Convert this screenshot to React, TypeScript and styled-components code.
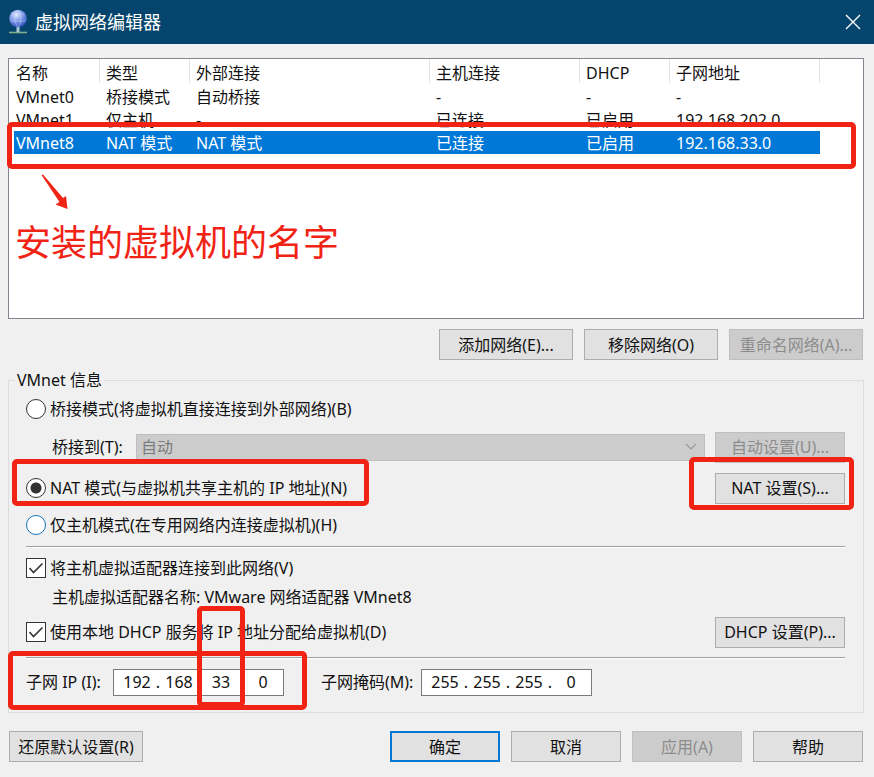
import React from "react";
import styled, { createGlobalStyle, css } from "styled-components";

const RED = "#f02314";

const GlobalStyle = createGlobalStyle`
  *, *::before, *::after { box-sizing: border-box; }
  body { margin: 0; background: #f0f0f0; }
  body, button, input, select {
    font-family: "Noto Sans", "Noto Sans CJK SC", sans-serif;
    font-size: 16px;
    line-height: 20px;
    color: #111;
  }
`;

const Dialog = styled.div`
  min-height: 100vh;
  background: #f0f0f0;
`;

const TitleBar = styled.header`
  display: flex;
  align-items: center;
  gap: 7px;
  height: 44px;
  padding: 0 12px 0 8px;
  background: #05456d;
  color: #fff;
`;

const Title = styled.h1`
  flex: 1;
  margin: 0;
  font-size: 18px;
  font-weight: 400;
  line-height: 24px;
`;

const CloseButton = styled.button`
  display: flex;
  padding: 0;
  border: 0;
  background: none;
`;

const Body = styled.main`
  padding: 14px 10px 14px 8px;
`;

const NetworkList = styled.section`
  position: relative;
  min-height: 261px;
  padding: 0 5px;
  background: #fff;
  border: 1px solid #828790;
`;

const Table = styled.table`
  width: 806px;
  table-layout: fixed;
  border-collapse: separate;
  border-spacing: 0;
  text-align: left;
`;

const Column = styled.col<{ $width: number }>`
  width: ${(p) => p.$width}px;
`;

const HeadCell = styled.th`
  height: 26px;
  padding: 1px 0 0 6px;
  font-weight: 400;
  white-space: nowrap;
  background: linear-gradient(#e2e2e2, #e2e2e2) right top / 1px 24px no-repeat;
  &:first-child { padding-left: 2px; }
`;

const Row = styled.tr<{ $selected?: boolean }>`
  ${(p) => p.$selected && css`background: #0078d7; color: #fff;`}
`;

const Cell = styled.td`
  height: 23px;
  padding: 0 0 0 6px;
  white-space: nowrap;
  &:first-child { padding-left: 2px; }
`;

const Mark = styled.span<{ $inset: string }>`
  position: absolute;
  inset: ${(p) => p.$inset};
  border: 5px solid ${RED};
  border-radius: 5px;
  pointer-events: none;
  z-index: 1;
`;

const Note = styled.p`
  position: absolute;
  left: 6px;
  top: 160px;
  margin: 0;
  color: ${RED};
  font-size: 36px;
  line-height: 48px;
  white-space: nowrap;
`;

const NoteArrow = styled.svg`
  position: absolute;
  left: 32px;
  top: 115px;
`;

const ButtonRow = styled.div`
  display: flex;
  justify-content: flex-end;
  gap: 11px;
  padding: 10px 1px 0;
`;

const Footer = styled(ButtonRow)`
  padding-top: 18px;
`;

const Button = styled.button<{ $width: number; $primary?: boolean; $push?: boolean }>`
  width: ${(p) => p.$width}px;
  height: 31px;
  padding: 0;
  flex: none;
  background: #e1e1e1;
  border: ${(p) => (p.$primary ? "2px solid #0078d7" : "1px solid #adadad")};
  white-space: nowrap;
  ${(p) => p.$push && css`margin-right: auto;`}
  &:disabled {
    background: #ccc;
    border-color: #bfbfbf;
    color: #8c8c8c;
  }
`;

const Group = styled.fieldset`
  min-width: 0;
  margin: 10px 0 0;
  padding: 0 18px 7px 17px;
  border: 1px solid #dcdcdc;
`;

const Legend = styled.legend`
  height: 20px;
  margin-left: -11px;
  padding: 0 2px;
`;

const Line = styled.div<{ $height: number; $indent?: boolean }>`
  position: relative;
  display: flex;
  align-items: center;
  justify-content: space-between;
  min-height: ${(p) => p.$height}px;
  padding-left: ${(p) => (p.$indent ? 26 : 0)}px;
  white-space: nowrap;
`;

const Option = styled.label`
  display: flex;
  align-items: center;
  gap: 4px;
`;

const Anchor = styled.span`
  position: relative;
  display: flex;
`;

const Radio = styled.input.attrs({ type: "radio" })<{ $hot?: boolean }>`
  appearance: none;
  width: 20px;
  height: 20px;
  margin: 0;
  background: #fff;
  border: 1px solid ${(p) => (p.$hot ? "#1874b8" : "#333")};
  border-radius: 50%;
  &:checked { background: radial-gradient(circle, #333 5px, #fff 6px); }
`;

const CheckWrap = styled.span`
  display: grid;
  > * { grid-area: 1 / 1; }
`;

const Check = styled.input.attrs({ type: "checkbox" })`
  appearance: none;
  width: 20px;
  height: 20px;
  margin: 0;
  background: #fff;
  border: 1px solid #333;
  & + svg { visibility: hidden; pointer-events: none; }
  &:checked + svg { visibility: visible; }
`;

const FieldLabel = styled.label<{ $width: number }>`
  flex: none;
  width: ${(p) => p.$width}px;
`;

const SelectWrap = styled.span`
  display: grid;
  flex: 1;
  align-items: center;
  margin-right: 10px;
  > * { grid-area: 1 / 1; }
  > svg { justify-self: end; margin-right: 8px; pointer-events: none; }
`;

const Select = styled.select`
  appearance: none;
  width: 100%;
  height: 27px;
  padding: 0 4px;
  background: #ccc;
  border: 1px solid #bfbfbf;
  border-radius: 0;
  &:disabled { color: #7c7c7c; opacity: 1; }
`;

const Rule = styled.hr`
  height: 2px;
  margin: 0;
  border: 0;
  border-top: 1px solid #a0a0a0;
  border-bottom: 1px solid #fff;
`;

const HostOnly = styled.div`
  padding-bottom: 6px;
`;

const Fields = styled.div`
  position: relative;
  display: flex;
  align-items: center;
  min-height: 46px;
  gap: 37px;
`;

const AddressField = styled.div`
  display: flex;
  align-items: center;
  white-space: nowrap;
`;

const Address = styled.div`
  display: flex;
  align-items: center;
  width: 171px;
  height: 27px;
  padding-left: 5px;
  background: #fff;
  border: 1px solid #7a7a7a;
`;

const OctetSlot = styled.span`
  position: relative;
  width: 36px;
`;

const Octet = styled.input`
  display: block;
  width: 100%;
  height: 25px;
  padding: 0;
  border: 0;
  background: none;
  text-align: center;
`;

const Dot = styled.span`
  width: 6px;
  text-align: center;
`;

const columns: [string, number][] = [
  ["名称", 86],
  ["类型", 90],
  ["外部连接", 240],
  ["主机连接", 150],
  ["DHCP", 90],
  ["子网地址", 150],
];

const networks = [
  ["VMnet0", "桥接模式", "自动桥接", "-", "-", "-"],
  ["VMnet1", "仅主机", "-", "已连接", "已启用", "192.168.202.0"],
  ["VMnet8", "NAT 模式", "NAT 模式", "已连接", "已启用", "192.168.33.0"],
];

function GlobeIcon() {
  return (
    <svg width="20" height="26" viewBox="0 0 20 26" aria-hidden="true">
      <defs>
        <radialGradient id="globe" cx="0.4" cy="0.28" r="0.75">
          <stop offset="0" stopColor="#e8eeff" />
          <stop offset="0.4" stopColor="#8fa9ec" />
          <stop offset="1" stopColor="#2c4fc0" />
        </radialGradient>
      </defs>
      <path d="M1 23.5h18" stroke="#7fae8a" strokeWidth="1.6" />
      <path d="M10 18v5" stroke="#a9cbd0" strokeWidth="3" />
      <circle cx="10" cy="9.5" r="8.8" fill="url(#globe)" />
      <path
        d="M4 6c3-2 9-2 12 0M2 11c4 2 12 2 16 0M10 1c-4 4-4 13 0 17M10 1c4 4 4 13 0 17"
        fill="none"
        stroke="#c9d8ff"
        strokeWidth="0.7"
        opacity="0.7"
      />
    </svg>
  );
}

function CheckOption({ children }: { children: React.ReactNode }) {
  return (
    <Option>
      <CheckWrap>
        <Check defaultChecked />
        <svg width="20" height="20" viewBox="0 0 20 20" aria-hidden="true">
          <path d="M3.5 10l4 4.5L16.5 5.5" fill="none" stroke="#333" strokeWidth="1.6" />
        </svg>
      </CheckWrap>
      {children}
    </Option>
  );
}

interface AddressInputProps {
  id: string;
  name: string;
  octets: string[];
  marked?: number;
}

function AddressInput({ id, name, octets, marked }: AddressInputProps) {
  return (
    <Address role="group" aria-label={name}>
      {octets.map((value, i) => (
        <React.Fragment key={i}>
          {i > 0 && <Dot>.</Dot>}
          <OctetSlot>
            <Octet id={i === 0 ? id : undefined} aria-label={`${name} ${i + 1}`} defaultValue={value} maxLength={3} />
            {marked === i && <Mark $inset="-64px -6px -12px" />}
          </OctetSlot>
        </React.Fragment>
      ))}
    </Address>
  );
}

export default function App() {
  return (
    <Dialog lang="zh-CN">
      <GlobalStyle />
      <TitleBar>
        <GlobeIcon />
        <Title>虚拟网络编辑器</Title>
        <CloseButton aria-label="关闭">
          <svg width="18" height="18" viewBox="0 0 18 18" aria-hidden="true">
            <path d="M2 2l14 14M16 2L2 16" stroke="#fff" strokeWidth="1.4" />
          </svg>
        </CloseButton>
      </TitleBar>
      <Body>
        <NetworkList>
          <Table>
            <colgroup>
              {columns.map(([label, width]) => (
                <Column key={label} $width={width} />
              ))}
            </colgroup>
            <thead>
              <tr>
                {columns.map(([label]) => (
                  <HeadCell key={label}>{label}</HeadCell>
                ))}
              </tr>
            </thead>
            <tbody>
              {networks.map((cells, r) => (
                <Row key={cells[0]} $selected={r === 2}>
                  {cells.map((cell, c) => (
                    <Cell key={c}>{cell}</Cell>
                  ))}
                </Row>
              ))}
            </tbody>
          </Table>
          <Mark $inset="63px 7px 149px -2px" />
          <NoteArrow width="30" height="38" viewBox="0 0 30 38" aria-hidden="true">
            <path d="M0.5 1L2 0.5L22 24L25 22L26.5 35L14.5 30.5L18.5 28Z" fill={RED} />
          </NoteArrow>
          <Note>安装的虚拟机的名字</Note>
        </NetworkList>

        <ButtonRow>
          <Button $width={134}>添加网络(E)...</Button>
          <Button $width={134}>移除网络(O)</Button>
          <Button $width={134} disabled>重命名网络(A)...</Button>
        </ButtonRow>

        <Group>
          <Legend>VMnet 信息</Legend>
          <Line $height={38}>
            <Option>
              <Radio name="mode" />
              桥接模式(将虚拟机直接连接到外部网络)(B)
            </Option>
          </Line>
          <Line $height={38} $indent>
            <FieldLabel $width={84} htmlFor="bridge">桥接到(T):</FieldLabel>
            <SelectWrap>
              <Select id="bridge" disabled>
                <option>自动</option>
              </Select>
              <svg width="12" height="8" viewBox="0 0 12 8" aria-hidden="true">
                <path d="M1 1l5 5 5-5" fill="none" stroke="#999" strokeWidth="1.2" />
              </svg>
            </SelectWrap>
            <Button $width={130} disabled>自动设置(U)...</Button>
          </Line>
          <Line $height={44}>
            <Anchor>
              <Option>
                <Radio name="mode" defaultChecked />
                NAT 模式(与虚拟机共享主机的 IP 地址)(N)
              </Option>
              <Mark $inset="-19px -22px -8px -14px" />
            </Anchor>
            <Anchor>
              <Button $width={130}>NAT 设置(S)...</Button>
              <Mark $inset="-16px -9px -6px -26px" />
            </Anchor>
          </Line>
          <HostOnly>
            <Line $height={30}>
              <Option>
                <Radio name="mode" $hot />
                仅主机模式(在专用网络内连接虚拟机)(H)
              </Option>
            </Line>
          </HostOnly>
          <Rule />
          <Line $height={39}>
            <CheckOption>将主机虚拟适配器连接到此网络(V)</CheckOption>
          </Line>
          <Line $height={20} $indent>主机虚拟适配器名称: VMware 网络适配器 VMnet8</Line>
          <Line $height={50}>
            <CheckOption>使用本地 DHCP 服务将 IP 地址分配给虚拟机(D)</CheckOption>
            <Button $width={130}>DHCP 设置(P)...</Button>
          </Line>
          <Rule />
          <Fields>
            <Anchor>
              <AddressField>
                <FieldLabel $width={87} htmlFor="subnet-ip">子网 IP (I):</FieldLabel>
                <AddressInput id="subnet-ip" name="子网 IP" octets={["192", "168", "33", "0"]} marked={2} />
              </AddressField>
              <Mark $inset="-18px -23px -14px -18px" />
            </Anchor>
            <AddressField>
              <FieldLabel $width={100} htmlFor="subnet-mask">子网掩码(M):</FieldLabel>
              <AddressInput id="subnet-mask" name="子网掩码" octets={["255", "255", "255", "0"]} />
            </AddressField>
          </Fields>
        </Group>

        <Footer>
          <Button $width={134} $push>还原默认设置(R)</Button>
          <Button $width={110} $primary>确定</Button>
          <Button $width={110}>取消</Button>
          <Button $width={110} disabled>应用(A)</Button>
          <Button $width={110}>帮助</Button>
        </Footer>
      </Body>
    </Dialog>
  );
}
